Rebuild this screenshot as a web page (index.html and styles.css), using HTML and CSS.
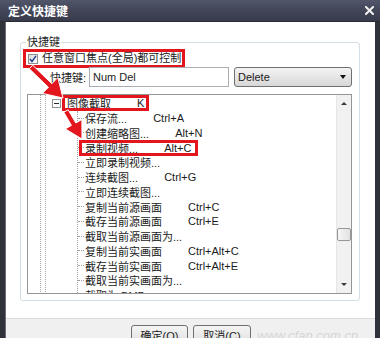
FILE: index.html
```html
<!DOCTYPE html>
<html lang="zh">
<head>
<meta charset="utf-8">
<title>定义快捷键</title>
<link rel="stylesheet" href="styles.css">
</head>
<body>
<div class="win">
  <div class="titlebar">
    <span class="title">定义快捷键</span>
    <svg class="close" width="9" height="9" viewBox="0 0 9 9"><path d="M1 1 L8 8 M8 1 L1 8" stroke="#f2f2f2" stroke-width="2" stroke-linecap="square"/></svg>
  </div>
  <div class="client">
    <div class="main">
      <div class="group">
        <div class="legend">快捷键</div>
        <div class="chkrow">
          <span class="hl hl-chk">
            <span class="chk"><svg width="8" height="8" viewBox="0 0 8 8"><path d="M1 4 L3 6.5 L7 0.8" fill="none" stroke="#1f3f8c" stroke-width="1.4"/></svg></span>
            <span class="chk-text">任意窗口焦点(全局)都可控制</span>
          </span>
        </div>
        <div class="keyrow">
          <span class="keylbl">快捷键:</span>
          <div class="input">Num Del</div>
          <div class="select"><span>Delete</span><span class="caret"></span></div>
        </div>
        <div class="tree">
          <div class="rows">
            <div class="row parent">
              <span class="minus"></span>
              <span class="hl hl-row hl-parent">图像截取<span class="key key-k">K</span></span>
            </div>
            <div class="children">
              <div class="row child"><span>保存流...</span><span class="key">Ctrl+A</span></div>
              <div class="row child"><span>创建缩略图...</span><span class="key">Alt+N</span></div>
              <div class="row child"><span class="hl hl-row hl-child"><span>录制视频...</span><span class="key">Alt+C</span></span></div>
              <div class="row child"><span>立即录制视频...</span></div>
              <div class="row child"><span>连续截图...</span><span class="key">Ctrl+G</span></div>
              <div class="row child"><span>立即连续截图...</span></div>
              <div class="row child"><span>复制当前源画面</span><span class="key">Ctrl+C</span></div>
              <div class="row child"><span>截存当前源画面</span><span class="key">Ctrl+E</span></div>
              <div class="row child"><span>截取当前源画面为...</span></div>
              <div class="row child"><span>复制当前实画面</span><span class="key">Ctrl+Alt+C</span></div>
              <div class="row child"><span>截存当前实画面</span><span class="key">Ctrl+Alt+E</span></div>
              <div class="row child"><span>截取当前实画面为...</span></div>
              <div class="row child"><span>截取为 BMP</span></div>
            </div>
          </div>
          <div class="scroll">
            <div class="sbtn"><span class="tri-up"></span></div>
            <div class="track"><div class="thumb"></div></div>
            <div class="sbtn"><span class="tri-down"></span></div>
          </div>
        </div>
      </div>
    </div>
    <div class="footer">
      <div class="btn btn-ok">确定(<u>O</u>)</div>
      <div class="btn btn-cancel">取消(<u>C</u>)</div>
      <span class="wm">www.cfan.com.cn</span>
    </div>
  </div>
  <svg class="arrows" width="380" height="338" viewBox="0 0 380 338">
    <polygon points="32.7,65.2 51.8,83.7 57.8,77.6 63,98 42.4,93.4 48.4,87.3 29.3,68.8" fill="#e3161e" stroke="#ffffff" stroke-width="1" stroke-linejoin="round"/>
    <polygon points="68.2,109.8 75.8,123 81.9,119.5 82,139 65.3,128.9 71.4,125.4 63.8,112.2" fill="#e3161e" stroke="#ffffff" stroke-width="1" stroke-linejoin="round"/>
  </svg>
</div>
</body>
</html>
```
FILE: styles.css
```css
* { box-sizing: border-box; }
html, body { margin: 0; padding: 0; }
body {
  width: 380px;
  height: 338px;
  overflow: hidden;
  font-family: "Liberation Sans", "Noto Sans CJK SC", sans-serif;
  font-size: 11px;
  color: #1b1b1b;
}
.win {
  position: relative;
  width: 380px;
  height: 338px;
  background: #2f313b;
  display: flex;
  flex-direction: column;
}
.titlebar {
  height: 22px;
  flex: none;
  display: flex;
  align-items: center;
  padding-left: 8px;
  background: linear-gradient(#52566a, #43475a 45%, #383b4b);
  border-bottom: 1px solid #2a2c35;
}
.title {
  color: #ffffff;
  font-family: "Noto Sans CJK SC", sans-serif;
  font-weight: bold;
  font-size: 12px;
  line-height: 14px;
}
.close { margin-left: auto; margin-right: 6px; }
.client {
  flex: 1;
  display: flex;
  flex-direction: column;
  margin: 0 5px;
  background: #ffffff;
  border-left: 1px solid #6b6d76;
}
.main {
  flex: 1;
  padding-top: 20px;
}
.group {
  width: 340px;
  height: 259px;
  margin-left: 14px;
  border: 1px solid #d3dde4;
  border-radius: 3px;
}
.legend {
  width: fit-content;
  margin: -7px 0 0 5px;
  padding: 0 1px;
  line-height: 13px;
  height: 13px;
  background: #ffffff;
  color: #1e1e1e;
}
.chkrow { display: flex; margin-top: 3px; }
.hl { outline: 3px solid #e3161e; }
.hl-chk {
  display: flex;
  align-items: center;
  margin-left: 5px;
  width: 156px;
  height: 13px;
}
.chk {
  width: 10px;
  height: 10px;
  margin-left: 2px;
  border: 1px solid #8e8f8f;
  background: linear-gradient(135deg, #dcdcdc, #fbfbfb);
  display: flex;
  align-items: center;
  justify-content: center;
}
.chk svg { display: block; }
.chk-text { margin-left: 4px; line-height: 13px; }
.keyrow {
  display: flex;
  align-items: center;
  height: 20px;
  margin-top: 2px;
}
.keylbl { margin-left: 29px; width: 39px; }
.input {
  width: 140px;
  height: 20px;
  border: 1px solid #abadb3;
  padding-left: 3px;
  line-height: 18px;
}
.select {
  margin-left: 5px;
  width: 118px;
  height: 20px;
  border: 1px solid #707070;
  border-radius: 3px;
  background: linear-gradient(#f3f3f3, #e6e6e6 50%, #d7d7d7);
  display: flex;
  align-items: center;
  padding: 0 5px 0 3px;
}
.caret {
  margin-left: auto;
  width: 0;
  height: 0;
  border-left: 3px solid transparent;
  border-right: 3px solid transparent;
  border-top: 4px solid #111;
}
.tree {
  margin-top: 7px;
  margin-left: 6px;
  width: 325px;
  height: 200px;
  border: 1px solid #959595;
  display: flex;
}
.rows {
  flex: 1;
  overflow: hidden;
  padding-top: 1px;
  background-image:
    repeating-linear-gradient(to bottom, #a8a8a8 0 1px, transparent 1px 2px),
    repeating-linear-gradient(to bottom, #a8a8a8 0 1px, transparent 1px 2px);
  background-size: 1px 100%, 1px 100%;
  background-position: 12px 0, 17px 0;
  background-repeat: no-repeat;
}
.row {
  display: flex;
  align-items: center;
  height: 14.75px;
  white-space: nowrap;
}
.parent { padding-left: 24px; }
.minus {
  width: 9px;
  height: 9px;
  border: 1px solid #929292;
  background: #fff;
  position: relative;
  flex: none;
}
.minus::after {
  content: "";
  position: absolute;
  left: 1px;
  top: 3px;
  width: 5px;
  height: 1px;
  background: #2a2a2a;
}
.hl-row {
  display: inline-flex;
  align-items: center;
  height: 10px;
}
.hl-parent { margin-left: 4px; padding: 0 2px; }
.key-k { margin-left: 25px; }
.children {
  margin-left: 49px;
  border-left: 1px dotted #a0a0a0;
}
.child::before {
  content: "";
  width: 6px;
  margin-right: 1px;
  border-top: 1px dotted #a0a0a0;
  flex: none;
}
.key { margin-left: 26px; }
.hl-child { margin-left: -3px; padding: 0 4px 0 3px; }
.scroll {
  width: 15px;
  flex: none;
  display: flex;
  flex-direction: column;
  background: #f1f1f1;
  border-left: 1px solid #e6e6e6;
}
.sbtn {
  height: 17px;
  display: flex;
  align-items: center;
  justify-content: center;
  flex: none;
}
.tri-up {
  width: 0; height: 0;
  border-left: 3px solid transparent;
  border-right: 3px solid transparent;
  border-bottom: 3px solid #3a3a3a;
}
.tri-down {
  width: 0; height: 0;
  border-left: 3px solid transparent;
  border-right: 3px solid transparent;
  border-top: 3px solid #3a3a3a;
}
.track { flex: 1; padding-top: 116px; }
.thumb {
  height: 13px;
  width: 14px;
  border: 1px solid #979797;
  border-radius: 2px;
  background: linear-gradient(to right, #f6f6f6, #e2e2e2);
}
.footer {
  height: 20px;
  flex: none;
  background: #f0f0f0;
  border-top: 1px solid #dcdcdc;
  display: flex;
  align-items: flex-start;
  padding: 6px 0 0 125px;
  overflow: hidden;
}
.btn {
  height: 22px;
  border: 1px solid #707070;
  border-radius: 3px;
  background: linear-gradient(#f4f4f4, #e9e9e9 50%, #dcdcdc);
  text-align: center;
  padding-top: 3px;
  line-height: 14px;
  flex: none;
}
.btn u { text-decoration: none; }
.btn-ok { width: 57px; }
.btn-cancel { width: 58px; margin-left: 5px; }
.wm {
  margin-left: 6px;
  margin-top: 3px;
  color: #d6d6d6;
  font-size: 13px;
  font-style: italic;
}
.arrows {
  position: absolute;
  left: 0;
  top: 0;
  pointer-events: none;
}
```
